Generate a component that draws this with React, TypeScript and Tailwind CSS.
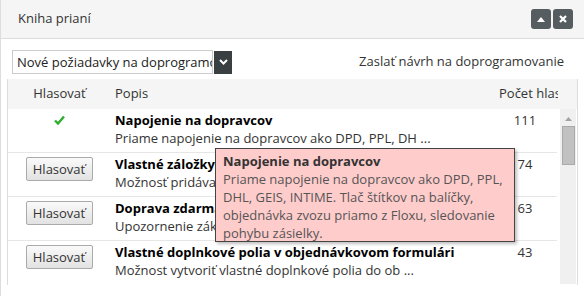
import React from "react";

const rows = [
  {
    title: "Napojenie na dopravcov",
    desc: "Priame napojenie na dopravcov ako DPD, PPL, DH ...",
    votes: 111,
    voted: true,
  },
  {
    title: "Vlastné záložky v objednávke",
    desc: "Možnosť pridávať vlastné záložky do detailu ...",
    votes: 74,
    voted: false,
  },
  {
    title: "Doprava zdarma od určitej sumy",
    desc: "Upozornenie zákazníka na dopravu zdarma ...",
    votes: 63,
    voted: false,
  },
  {
    title: "Vlastné doplnkové polia v objednávkovom formulári",
    desc: "Možnost vytvoriť vlastné doplnkové polia do ob ...",
    votes: 43,
    voted: false,
  },
];

function Check() {
  return (
    <svg width="11" height="10" viewBox="0 0 11 10" className="mt-[6px]">
      <path d="M1 5.5 L4 8.5 L10 1.5" fill="none" stroke="#2fad2f" strokeWidth="2.4" />
    </svg>
  );
}

export default function App() {
  return (
    <div className="relative w-[584px] h-[296px] overflow-hidden bg-white border-l border-[#dddddd] font-['Open_Sans',sans-serif] text-[13px] text-[#333]">
      <div className="h-[39px] bg-[#f5f5f5] border-b border-[#dddddd] flex items-center justify-between pl-[17px] pr-[11px]">
        <span className="text-[#333]">Kniha prianí</span>
        <div className="flex gap-[2px]">
          <button className="w-[20px] h-[20px] rounded-[3px] bg-[#565d61] flex items-center justify-center">
            <svg width="8" height="5" viewBox="0 0 8 5">
              <path d="M0 5 L4 0 L8 5 Z" fill="#fff" />
            </svg>
          </button>
          <button className="w-[20px] h-[20px] rounded-[3px] bg-[#565d61] flex items-center justify-center">
            <svg width="8" height="8" viewBox="0 0 8 8">
              <path d="M1 1 L7 7 M7 1 L1 7" stroke="#fff" strokeWidth="2.2" />
            </svg>
          </button>
        </div>
      </div>

      <div className="pt-[11px] px-[6px]">
        <div className="flex items-center justify-between pl-[5px] pr-[14px]">
          <div className="flex items-center">
            <div className="w-[201px] h-[24px] border border-[#cccccc] bg-white pl-[4px] leading-[22px] whitespace-nowrap overflow-hidden text-[#222]">
              Nové požiadavky na doprogramovanie
            </div>
            <div className="ml-[1px] w-[18px] h-[23px] bg-[#3a3f42] flex items-center justify-center">
              <svg width="9" height="6" viewBox="0 0 9 6">
                <path d="M1 1 L4.5 4.5 L8 1" fill="none" stroke="#fff" strokeWidth="2" />
              </svg>
            </div>
          </div>
          <span className="text-[#333]">Zaslať návrh na doprogramovanie</span>
        </div>

        <div className="mt-[5px] border-x border-[#dddddd] w-[571px]">
          <div className="h-[30px] bg-[#f5f5f5] flex items-center">
            <div className="w-[100px] text-center pl-[3px]">Hlasovať</div>
            <div className="w-[384px] pl-[7px]">Popis</div>
            <div className="w-[66px] pl-[7px] whitespace-nowrap overflow-hidden">Počet hlasov</div>
          </div>
          <div className="flex h-[176px]">
            <div className="w-[552px] pr-[3px]">
              {rows.map((r, i) => (
                <div key={i} className="h-[44px] border-b border-[#e6e6e6] flex last:border-b-0">
                  <div className="w-[100px] flex justify-center pl-[2px]">
                    {r.voted ? (
                      <Check />
                    ) : (
                      <button className="mt-[4px] w-[67px] h-[24px] rounded-[2px] border border-[#aaaaaa] bg-gradient-to-b from-[#fafafa] to-[#e2e2e2] text-[#333] leading-[22px]">
                        Hlasovať
                      </button>
                    )}
                  </div>
                  <div className="w-[384px] pl-[7px] pt-[2px] leading-[18px] whitespace-nowrap overflow-hidden">
                    <div className="font-bold text-black">{r.title}</div>
                    <div className="text-[#333]">{r.desc}</div>
                  </div>
                  <div className="w-[52px] ml-[7px] pt-[2px] leading-[18px] text-center">{r.votes}</div>
                </div>
              ))}
            </div>
            <div className="w-[16px] h-[175px] bg-[#f0f0f0] flex flex-col items-center">
              <svg width="7" height="4" viewBox="0 0 7 4" className="mt-[8px]">
                <path d="M0 4 L3.5 0 L7 4 Z" fill="#a3a3a3" />
              </svg>
              <div className="mt-[5px] w-[13px] h-[39px] bg-[#c1c1c1] border border-[#a9a9a9]" />
            </div>
          </div>
        </div>
      </div>

      <div className="absolute left-[214px] top-[148px] w-[300px] h-[94px] bg-[#ffcccc] border border-[#444] shadow-[2px_2px_3px_rgba(0,0,0,0.25)] px-[7px] pt-[3px] leading-[18px] text-[#555]">
        <div className="font-bold text-[#333]">Napojenie na dopravcov</div>
        <div>
          Priame napojenie na dopravcov ako DPD, PPL, DHL, GEIS, INTIME. Tlač štítkov na balíčky, objednávka zvozu priamo z Floxu, sledovanie pohybu zásielky.
        </div>
      </div>
    </div>
  );
}
